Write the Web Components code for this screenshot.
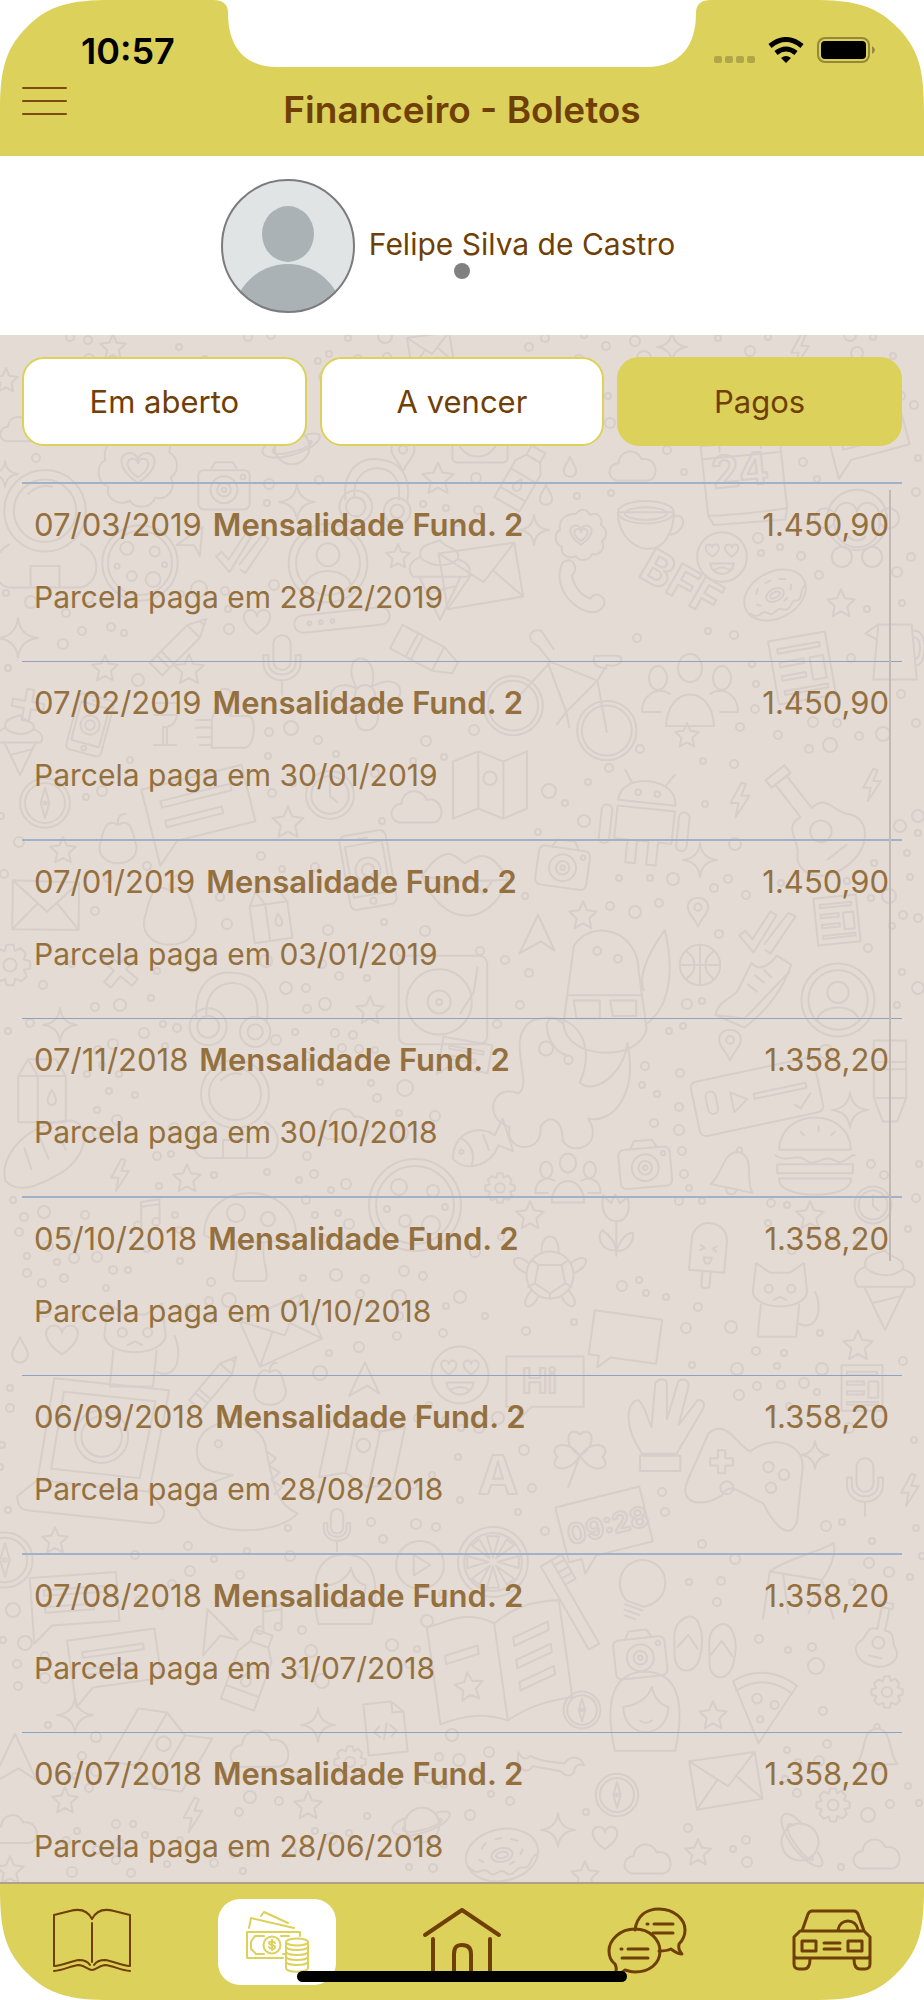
<!DOCTYPE html>
<html lang="pt-BR">
<head>
<meta charset="utf-8">
<meta name="viewport" content="width=device-width, initial-scale=1">
<title>Financeiro - Boletos</title>
<style>
html{background:#fff}
body{margin:0;font-family:Inter,"Liberation Sans",sans-serif;color:#703f06;
--accent:#dcd15b;--ink:#703f06;--muted:#94703f;--paper:#e4dbd4}
</style>
</head>
<body>
<app-screen>
  <status-bar slot="top" time="10:57"></status-bar>
  <title-bar slot="top">Financeiro - Boletos</title-bar>
  <student-card slot="student">Felipe Silva de Castro</student-card>
  <filter-tabs slot="filters">
    <filter-button>Em aberto</filter-button>
    <filter-button>A vencer</filter-button>
    <filter-button active>Pagos</filter-button>
  </filter-tabs>
  <boleto-list slot="list"></boleto-list>
  <tab-bar slot="bottom"></tab-bar>
</app-screen>

<script>
const define = (name, html, setup) => {
  const template = document.createElement('template');
  template.innerHTML = html;
  customElements.define(name, class extends HTMLElement {
    constructor() {
      super();
      this.attachShadow({ mode: 'open' }).append(template.content.cloneNode(true));
    }
    connectedCallback() { if (setup) setup(this, this.shadowRoot); }
  });
};

/* ---------- doodle wallpaper ---------- */
const star = '<path d="M0-46L13-16L46-12L21 11L28 44L0 28L-28 44L-21 11L-46-12L-13-16Z"/>';
const heart = '<path d="M0 40C-60 0-50-40-22-40C-8-40 0-28 0-20C0-28 8-40 22-40C50-40 60 0 0 40Z"/>';
const cam = '<rect x="-46" y="-30" width="92" height="70" rx="10"/><path d="M-24-30L-16-44H16L24-30"/><circle cy="5" r="24"/><circle cy="5" r="12"/><circle cy="5" r="4"/><circle cx="34" cy="-18" r="4"/>';
const shapes = {
  star, heart, cam,
  spark: '<path d="M0-50Q5-5 50 0Q5 5 0 50Q-5 5-50 0Q-5-5 0-50Z"/>',
  cloud: '<path d="M-35 28C-58 20-50-8-30-8C-28-38 10-40 18-16C50-24 58 26 30 28Z"/>',
  drop: '<path d="M0-46C10-20 28-4 28 16C28 54-28 54-28 16C-28-4-10-20 0-46Z"/>',
  badge: '<path d="M-10-42C0-56 14-50 18-40C34-48 44-34 40-20C54-12 52 6 42 12C50 28 36 42 22 38C16 54-6 52-10 42C-26 50-42 38-38 24C-54 18-54-4-42-10C-46-30-30-44-10-42Z"/><g transform="scale(.48)">' + heart + '</g><g transform="scale(.3)">' + heart + '</g>',
  planet: '<circle r="28"/><path d="M-24-12C-60 0-56 26-4 14C46 2 62-30 24-20"/><path d="M-27 0C-40 12-20 14 0 8C26 2 40-10 27-10"/>',
  pin: '<path d="M0 48C-12 18-34 6-34-16C-34-58 34-58 34-16C34 6 12 18 0 48Z"/><circle cy="-16" r="12"/>',
  headset: '<path d="M-40 10C-44-30-20-48 6-44C36-42 48-20 44 12"/><path d="M-28 6C-30-20-12-34 6-32C24-30 36-16 32 10"/><circle cx="-26" cy="20" r="22"/><circle cx="-26" cy="20" r="13"/><circle cx="30" cy="26" r="18"/><circle cx="30" cy="26" r="9"/>',
  astro: '<circle cy="-16" r="34"/><circle cy="-16" r="26"/><path d="M-30 12C-48 22-44 46-30 48H30C46 44 48 20 30 12M-14-30C-8-36 0-38 6-36M-12 48V30H12V48"/>',
  cookie: '<circle r="46"/><circle r="39"/><circle cx="-16" cy="-18" r="8"/><circle cx="18" cy="-14" r="6"/><circle cx="-10" cy="16" r="6"/><circle cx="16" cy="20" r="9"/><circle cx="30" cy="2" r="3"/><circle cx="-28" cy="4" r="3"/>',
  check: '<path d="M-48 6L-38-2L-26 12L4-34L14-28L-24 34ZM-6 20L34-32L46-26L4 36L-4 30"/>',
  user: '<circle r="48"/><circle r="39"/><circle cy="-10" r="14"/><path d="M-28 27C-22 4 22 4 28 27"/>',
  pencil: '<path d="M-12-26L0-50L12-26V46H-12ZM-12-26H12M-12 32H12M-12 24H12M-4-42H4"/>',
  bar: '<rect x="-50" y="-9" width="100" height="18" rx="9"/><circle cx="-34" r="2"/><circle cx="-22" r="2"/><circle cx="-10" r="2"/>',
  tube: '<path d="M-44-18L20-18L46-8V8L20 18H-44ZM-20-18V18M-12-18V18M20-18V18"/>',
  mic: '<rect x="-14" y="-48" width="28" height="56" rx="14"/><path d="M-30-16V-4C-30 34 30 34 30-4V-16H22V-4C22 22-22 22-22-4V-16ZM0 24V48"/>',
  thumb: '<path d="M-44 0H-20L-6-46C8-52 16-40 8-6H36C48-4 46 40 30 42H-20V0M-20 12C-30 10-42 12-44 12M-20 26H-42M-20 38H-38"/>',
  plus: '<path d="M-10-44H10V-10H44V10H10V44H-10V10H-44V-10H-10Z"/>',
  cone: '<path d="M-26-4L0 50L26-4ZM-34-4C-46-20-26-30-24-28C-30-46-4-46 0-50C4-40 28-40 22-26C44-20 36-4 34-4ZM-22-26C-8-16 10-16 22-26M-14 16L18 8"/>',
  flower: '<circle r="12"/><path d="M-10-8C-34-54 20-56 8-10C52-34 54 22 11 7C32 54-28 52-6 11C-54 30-50-26-10-8Z"/>',
  glass: '<path d="M-26-44H26C28-8 14 2 4 4V40H22M-4 4V40H-22M4 40H-4M-4 4H4M-22-20H22"/>',
  bottle: '<path d="M-12-50H12V-34L22-18V46H-22V-18L-12-34ZM-12-34H12M-22-4H22M-22 28H22"/><path d="M0 2C8 14 8 20 0 22C-8 20-8 14 0 2Z"/>',
  cal: '<path d="M-44-36L40-44L48 30C20 34-10 38-36 38ZM-42-22L42-30M-36 38L-30 48L46 42L48 30M-24-44V-30M20-48V-34"/>',
  cup: '<path d="M-46-14C-46 20-20 40 0 38C20 38 34 14 34-14Z"/><ellipse cx="-6" cy="-14" rx="40" ry="16"/><ellipse cx="-6" cy="-12" rx="30" ry="9"/><path d="M33-8C56-14 50 18 26 18"/>',
  smile: '<circle r="46"/><g transform="translate(-18 -12) scale(.28)">' + heart + '</g><g transform="translate(18 -12) scale(.28)">' + heart + '</g><path d="M-22 12H22C18 38-18 38-22 12ZM-14 24C-6 18 6 18 14 24"/>',
  monkey: '<circle cy="-6" r="36"/><circle cx="-38" cy="-8" r="12"/><circle cx="38" cy="-8" r="12"/><path d="M-26 4C-34-30-4-34 0-16C4-34 34-30 26 4C22 34-22 34-26 4ZM-10 14C-4 20 4 20 10 14"/><circle cx="-18" cy="38" r="12"/><circle cx="18" cy="38" r="12"/>',
  call: '<path d="M-30-44C-10-58-2-30-14-22C-10 0 4 14 18 18C26 2 50 18 40 32C20 64-56 10-30-44Z"/>',
  donut: '<ellipse rx="48" ry="34"/><ellipse rx="14" ry="9"/><ellipse rx="8" ry="4"/><path d="M-46 6C-36 24-30 8-22 18C-16 30-6 14 0 24C10 34 16 16 24 22C34 26 36 8 46 8M-24-14L-18-20M16-18L24-14M-30 0L-26 4M28-2L24 4M-4-22H4M8 14L14 12"/>',
  env: '<path d="M-46-24L38-36L48 24L-36 38ZM-46-24L4 8L38-36M-36 38L-10 0M48 24L16-4"/>',
  bike: '<circle cx="-30" cy="10" r="19"/><circle cx="-30" cy="10" r="16"/><circle cx="30" cy="26" r="19"/><circle cx="30" cy="26" r="16"/><path d="M-31 9L-6-18L24-6L4 14L-8-18M24-6L30 27M-6-18L-14-28C-22-32-20-40-12-38L-4-26M24-6L30-16C40-14 42-22 36-22H22C20-14 28-14 30-14M4 14L-2 22M4 14L6 24"/>',
  people: '<path d="M-24 36C-22-6 22-6 24 36ZM-30 22H-48C-48 4-32-4-20 4M30 22H48C48 4 32-4 20 4"/><ellipse cy="-22" rx="12" ry="14"/><ellipse cx="-32" cy="-12" rx="9" ry="12"/><ellipse cx="32" cy="-12" rx="9" ry="12"/>',
  page: '<path d="M-38-42H38V42H-38ZM-28-30H28V-24H-28ZM-28-12H4V-6H-28ZM-28 6H4V12H-28ZM12-12H30V18H12ZM-28 26H30V31H-28Z"/>',
  jug: '<path d="M-26-40H26L34 46H-34ZM28-30C54-34 50 26 32 24M29-20C42-22 42 14 31 14M-26-40L-46-26L-28-16"/>',
  bubble: '<path d="M-46-32H46V20H-26L-46 38ZM-32-18H32V-12H-32ZM-32 0H20V6H-32Z"/>',
  compass: '<circle r="46"/><circle r="37"/><path d="M0-28L8 0L0 28L-8 0Z"/><circle r="3"/>',
  clock: '<circle r="46"/><circle r="36"/><path d="M0-24V2L14 14"/>',
  map: '<path d="M-44-28L-14-40L16-28L44-40V28L16 40L-14 28L-44 40ZM-14-40V28M16-28V40"/><circle cx="0" cy="-8" r="8"/>',
  android: '<path d="M-30-18C-30-48 30-48 30-18ZM-18-38L-26-50M18-38L26-50M-30-12H30V22H16V46H6V22H-6V46H-16V22H-30Z"/><rect x="-46" y="-12" width="11" height="40" rx="5"/><rect x="35" y="-12" width="11" height="40" rx="5"/><circle cx="-10" cy="-28" r="3"/><circle cx="10" cy="-28" r="3"/>',
  bolt: '<path d="M4-48L-26 8H-4L-12 48L26-12H4L16-44Z"/>',
  guitar: '<path d="M-6-8C-24-10-18 8-28 16C-38 28-26 48 0 48C26 48 38 28 28 16C18 8 24-10 6-8V-42H-6Z"/><circle cy="12" r="9"/><path d="M-10-42H10V-50H-10ZM-10 34H10"/>',
  device: '<rect x="-30" y="-48" width="60" height="96" rx="8"/><path d="M-24-34H24V32H-24ZM-6-41H6"/><circle r="16"/><circle r="8"/><circle cy="40" r="4"/>',
  pear: '<path d="M0-28C26-44 28-8 34 10C40 54-40 54-34 10C-28-8-26-44 0-28ZM0-28C-2-42 6-50 14-48"/>',
  lips: '<path d="M-48-10C-20-50-10-30 0-24C10-30 26-46 48-6C26 50-26 46-48-10ZM-48-10C-20-4 20-4 48-6M-30-4L-20 10L-10-4M10-4L20 10L30-4"/>',
  tri: '<path d="M-40 40L0-44L36 34L6 14Z"/>',
  pine: '<path d="M-24-34C-10-56 26-46 26-14L32 30C26 56-30 54-32 26ZM-28 4H28M-24 8H-4V22H-22ZM4 8H24V20H6ZM-32 26C-52 10-46 46-30 50M32 26C56 8 50-30 46-46C30-24 26-8 30 0"/><circle cx="-6" cy="-30" r="3"/><circle cx="10" cy="-24" r="3"/>',
  ball: '<circle r="46"/><path d="M-46 0H46M0-46V46M-32-32C-6-14-6 14-32 32M32-32C6-14 6 14 32 32"/>',
  shoe: '<path d="M-46 30C-42 10-24 14-18-4L-6-28C4-16 16-28 22-36L38-26C30 0 10 26-14 44ZM-46 30L-14 34L36-18M-10-4L0 4M-2-14L8-6M8-20L16-12"/>',
  disc: '<rect x="-46" y="-46" width="92" height="92" rx="8"/><circle cx="-4" cy="2" r="34"/><circle cx="-4" cy="2" r="12"/><circle cx="-4" cy="2" r="3"/><path d="M36-34L32-8L18 14"/>',
  gear: '<path d="M-8-46H8L11-32L24-39L36-26L31-13L46-8V8L32 11L38 26L26 37L12 31L8 46H-8L-11 32L-26 38L-37 26L-31 12L-46 8V-8L-32-11L-38-26L-26-37L-12-31Z"/><circle r="15"/>',
  milk: '<path d="M-34-20L-20-44H20L34-20V46H-34ZM-34-20H34M-20-44L-6-20V46"/><path d="M14 0C22 12 22 20 14 22C6 20 6 12 14 0Z"/>',
  octo: '<path d="M-20-46C14-56 26-26 14-2C24 8 46-8 48-30C56 6 38 28 20 24C32 42 10 52 2 40C2 24-8 20-14 30C-12 50-40 48-36 30C-56 24-48-2-30 6C-18 0-40-34-20-46Z"/><circle cx="-10" cy="-26" r="5"/><circle cx="6" cy="-18" r="3"/>',
  voice: '<rect x="-50" y="-22" width="100" height="44" rx="5"/><path d="M-20-8V8L-8 0ZM-2-3H40V1H-2ZM28 12L32 16L42 6"/><rect x="-40" y="-12" width="8" height="18" rx="4"/>',
  burger: '<path d="M-40-8C-38-56 38-56 40-8ZM-44-2C-30 8-22-6-10 4C0 12 10-4 22 4C32 10 40-4 44-2M-42 8H42V18H-42ZM-40 24H40C42 48-42 48-40 24Z"/><path d="M-16-28L-12-24M4-34V-28M18-24L22-28"/>',
  bell: '<path d="M-38 30C-20 10-30-34 0-36C30-34 20 10 38 30ZM-10 30C-8 44 8 44 10 30M-5-36C-6-48 6-48 5-36"/>',
  fish: '<path d="M-46 6C-30-34 10-30 26-6L46-26L44 26L26 10C6 34-32 34-46 6ZM-22-18C-12-6-12 12-22 24M10-12V12"/><circle cx="-30" cy="0" r="3"/>',
  bread: '<path d="M-46 30C-54 0-20-38 30-40C54-36 50 0 20 20C0 32-30 48-46 30ZM-24-8L-16 16M-6-20L4 4M14-28L24-6"/>',
  note: '<path d="M-20 28V-38L34-46V18M-20-24L34-32"/><circle cx="-30" cy="30" r="11"/><circle cx="24" cy="20" r="11"/>',
  shroom: '<path d="M-46 0C-46-56 46-56 46 0C30 10-30 10-46 0ZM-14 8C-10 24-22 44-14 46H14C22 44 10 24 14 8"/><circle cx="-14" cy="-22" r="9"/><circle cx="18" cy="-16" r="7"/>',
  turtle: '<circle r="28"/><path d="M-14-12H14L18 10L0 22L-18 10ZM-14-12L-22-18M14-12L22-18M18 10L26 14M0 22V28M-18 10L-26 14M-10-27C-12-52 12-52 10-27M-25-14C-44-30-52-12-28-2M25-14C44-30 52-12 28-2M-22 18C-40 40-22 44-14 26M22 18C40 40 22 44 14 26"/>',
  tulip: '<path d="M-18-46L-6-34L0-48L8-34L20-44C26-16 14-6 2-6C-12-6-24-20-18-46ZM2-6V48M2 40C-26 40-28 14-20 8C-8 16 0 26 2 40C10 20 20 12 28 12C30 30 16 42 2 40"/>',
  pop: '<path d="M-26 24V-20C-26-56 26-56 26-20V24ZM-6 24V46C-4 50 4 50 6 46V24M-12-14L-6-10L-12-6M12-14L6-10L12-6M-6 4H6C4 16-4 16-6 4Z"/>',
  cat: '<path d="M-34-10L-30-46L-12-34H12L30-46L34-10C30 14-30 14-34-10ZM-24 6L-28 46H20L24 6M24 30C50 40 52 6 44-10"/><circle cx="-14" cy="-14" r="5"/><circle cx="14" cy="-14" r="5"/><path d="M-8 0L0-4L8 0"/>',
  box: '<path d="M-46-34H46V26H-16L-32 42V26H-46Z"/>',
  hand: '<path d="M-24 30C-44 0-40-24-28-26C-20-20-18-4-14 2L-10-44C-4-50 2-48 2-42V-6L14-46C22-50 26-44 24-38L14 0L34-26C42-26 42-20 38-14L12 30ZM-26 32H16V48H-26Z"/>',
  laptop: '<path d="M-34-44H40L34 22H-38ZM-27-36H32L27 14H-30ZM-38 22L-50 34C-48 42-46 42-40 42H36C46 42 46 34 44 32L34 22"/><circle cx="0" cy="-10" r="17"/><circle cx="0" cy="-10" r="13"/>',
  dino: '<path d="M-36-20C-36-52 20-52 22-20C28 10 30 24 48 32C30 52-30 50-34 30C-44 24-30 14-28 8L-6 0C-20-2-36-2-36-20ZM22-20L30-14L24-8L33-2L26 4L35 10L29 16"/><circle cx="-18" cy="-26" r="3"/>',
  clover: '<path d="M0-2C-30-20-16-50 0-34C16-50 30-20 0-2C20-30 50-16 34 0C50 16 20 30 0-2ZM0-2C-20-30-50-16-34 0C-50 16-20 30 0-2L-18 46"/>',
  pad: '<path d="M-28-36C-14-48-6-26 4-22C22-36 48-28 44-6L40 32C34 48 22 34 14 18C-4 10-12 0-18 12C-34 22-52 18-44 0Z"/><g transform="translate(-18 -14) scale(.2)"><path d="M-14-44H14V-14H44V14H14V44H-14V14H-44V-14H-14Z"/></g><circle cx="-14" cy="6" r="5"/><circle cx="18" cy="-10" r="4"/><circle cx="30" cy="-4" r="4"/><circle cx="20" cy="6" r="4"/>',
  lime: '<circle r="46"/><circle r="38"/><path d="M0-6L-8-34H8ZM0 6L-8 34H8ZM-6 0L-34-8V8ZM6 0L34-8V8ZM-4-5L-28-22L-18-30ZM4 5L28 22L18 30ZM4-5L28-22L18-30ZM-4 5L-28 22L-18 30Z"/>',
  play: '<circle r="46"/><path d="M-12-20V20L20 0Z"/>',
  brush: '<path d="M-6-48H6V48H-6ZM6-48H18V-20H6M6-42H18M6-34H18M6-27H18"/>',
  chair: '<path d="M-36-10C-20-24 30-36 40-44C44-30 34-10 26 0L40 46M-36-10L-44 46M-36-10L26 0L10 40M-20-6L-14 40"/>',
  bulb: '<path d="M-14 22C-50 0-34-46 0-46C34-46 50 0 14 22ZM-14 28H14M-12 36H12M-8 44H8"/>',
  flip: '<path d="M-30-40C-8-56 0-20-6 6C-10 34-40 34-40 6C-40-14-44-30-30-40ZM-36-4L-22-20L-10-2M14-30C34-46 46-12 38 14C34 44 4 42 6 14C6-6 2-20 14-30ZM8 6L22-12L36 8"/>',
  book: '<path d="M0-30C-20-44-36-34-48-34V36C-30 32-16 32 0 40C16 32 30 30 48 30V-40C30-42 16-40 0-30ZM0-30V40M-38-12L-14-16V-10L-38-6ZM12-18L38-26V-20L12-12ZM12-2L38-10V-4L12 4ZM12 14L38 6V12L12 20Z"/><g transform="translate(-24 12) scale(.22)">' + star + '</g>',
  girl: '<path d="M-36 46C-48-10-40-48 0-48C40-48 48-10 36 46ZM-26-6C-10-8 4-16 8-30C12-14 20-8 28-6C26 34-24 34-26-6ZM-6 10C-2 14 4 14 8 10"/>',
  pizza: '<path d="M-40-30C-10-48 20-40 40-24L-8 48ZM-36-18C-10-34 14-30 34-14"/><circle cx="-10" cy="-8" r="6"/><circle cx="12" cy="0" r="5"/><circle cx="-6" cy="18" r="4"/>',
  doc: '<path d="M-34-46H16L36-26V46H-34ZM16-46V-26H36M-10-4L-20 6L-10 16M10-4L20 6L10 16M4-8L-4 20"/>',
  wrench: '<path d="M-48-10C-40 0-34-2-30-8C-20-4-10-4 20-6C28-22 42-18 48-8C40-10 34-4 36 4C30 14 22 10 16 6H-24C-30 20-46 16-48-10Z"/>'
};

const doodles = `star 113 347 28|star 6 380 26|cloud 20 430 40|badge 138 468 78|cam 224 487 56|planet 292 447 62|pin 403 455 34|star 438 478 34|headset 375 492 74|spark 5 474 26
astro 45 530 120|spark 297 502 36|cookie 140 563 82|tri 195 540 34 30|check 243 553 56|user 328 563 82|star 398 556 26|cone 440 580 80|pencil 180 645 74 45|heart 257 622 30|bar 342 620 96 -6|tube 425 652 74 28
mic 282 665 62|thumb 225 720 66|star 189 669 32|star 105 668 28|spark 18 638 40|plus 28 705 36 10|cone 20 745 60|device 90 725 60 15|flower 365 695 84|glass 165 725 50|bottle 522 478 66 30|drop 570 467 22|drop 546 495 22
cloud 633 467 48|cal 742 480 94|cup 650 522 70|smile 722 557 54|monkey 857 525 84|badge 581 535 50|call 580 588 58|donut 775 595 68 -28|star 841 603 30|spark 534 530 30|env 480 575 90|bike 560 690 156|people 690 690 100
page 802 668 76 -10|jug 895 650 64|star 687 735 26|bubble 868 438 84 -15|disc 480 435 60|spark 672 347 30|bolt 800 350 34|env 430 350 50
compass 45 803 54|bubble 200 812 112 -14|clock 330 795 52|cloud 417 808 52|map 490 785 84|android 645 820 96 6|bolt 740 800 36|guitar 812 820 120 -38|star 288 822 34|device 368 870 78 -10|cam 563 865 56 8|pear 118 840 54
lips 465 885 90|star 63 850 28|env 45 905 78 10|pear 170 912 76|milk 270 915 56 -8|tri 538 935 46|star 583 915 30|pin 698 912 30|check 768 932 60|page 837 920 56 -6|pine 605 990 130|ball 700 965 44|shoe 757 988 90|user 838 1000 76
disc 443 1000 96|headset 230 1010 84|gear 10 965 44|bolt 872 785 34|plus 120 970 44 40|milk 42 1090 70|astro 235 1110 100|octo 560 1085 140|pin 730 1045 32|voice 757 1097 126 -12|burger 815 1157 90|bell 735 1172 56 12
cam 645 1165 56 -5|people 568 1178 68|cookie 415 1205 100|fish 480 1145 66 -20|star 187 1178 30|bolt 120 1175 34|gear 500 1188 32|spark 850 1110 36|bread 45 1155 86|note 148 1215 34|shroom 250 1235 100|turtle 550 1275 84
tulip 615 1225 64|pop 708 1255 68 5|cone 885 1290 80|star 530 1215 30|star 810 1215 30|cat 780 1300 80|clock 873 1205 40|bubble 465 1058 54 10|cloud 345 1125 50|tube 890 1080 90 90|star 370 1010 30|spark 60 1025 34
heart 62 1340 36|cat 135 1345 90|smile 460 1375 62|box 545 1385 84|page 862 1388 54|pencil 215 1382 66 40|hand 665 1425 96|laptop 100 1452 156 6|dino 240 1475 120|map 362 1452 84 12|clover 580 1457 66|pad 745 1480 130
mic 865 1487 60|drop 20 1350 28|pear 270 1385 46|star 858 1345 32|env 280 1330 80 -15|box 625 1340 74 8|tri 365 1380 40|box 605 1528 94 -14|star 55 1540 28|lime 493 1562 76|play 420 1565 52|girl 345 1590 74|mic 337 1530 44
brush 570 1605 100 -30|chair 800 1580 84|bulb 640 1590 66 20|flip 705 1650 76|cam 640 1655 56 -6|guitar 880 1635 66 12|bubble 75 1605 94 -4|bubble 115 1665 96 -8|tri 215 1630 50 -20|note 270 1620 34|book 500 1665 140 -8|girl 645 1712 84
pizza 765 1705 80|gear 887 1692 34|spark 75 1715 36|doc 385 1728 56 -6|compass 582 1710 40|star 713 1715 30|wrench 550 1765 70 10|env 725 1780 78|compass 617 1795 46|gear 833 1805 36|donut 502 1855 76 -12|planet 800 1842 66 70
planet 422 1825 62|star 308 1805 30|bolt 193 1815 36|cloud 648 1860 48|cloud 877 1855 48|star 65 1800 28|star 585 1875 30|bottle 250 1670 80 20|map 160 1750 90 30|compass 5 1560 60|gear 350 1762 34|cloud 15 1830 46|star 10 1870 30
spark 558 1830 34|heart 605 1838 28|star 698 1852 28|cloud 260 1750 60|tri 15 1760 60|bell 877 1748 54|spark 318 1725 34|spark 815 1455 28|bolt 910 1490 34|spark 700 860 34`
  .split(/[|\n]/).map(s => s.split(' ')).map(([k, ...n]) => [k, ...n.map(Number)]);

const wallpaper = () => {
  const placed = doodles.map(([, x, y, s]) => [x, y, s * .5]);
  let out = doodles.map(([k, x, y, s, r = 0]) =>
    `<g transform="translate(${x} ${y}) rotate(${r}) scale(${s / 100})">${shapes[k]}</g>`).join('');
  placed.push([650, 585, 28], [685, 600, 28], [495, 1475, 26]);
  let seed = 7;
  const rnd = () => (seed = (seed * 16807) % 2147483647) / 2147483647;
  for (let i = 0; i < 2600; i++) {
    const x = Math.round(rnd() * 924), y = Math.round(335 + rnd() * 1545), r = 3 + Math.round(rnd() * rnd() * 5);
    if (placed.some(([a, b, c]) => Math.hypot(a - x, b - y) < c + r + 7)) continue;
    placed.push([x, y, r]);
    out += `<circle cx="${x}" cy="${y}" r="${r}"/>`;
  }
  return out + `<g font-weight="700"><text x="712" y="486" font-size="44" transform="rotate(-6 740 475)">24</text>
    <text x="634" y="594" font-size="46" transform="rotate(30 670 590)">BFF</text>
    <text x="522" y="1393" font-size="34">Hi</text><text x="478" y="1494" font-size="54">A</text>
    <text x="567" y="1536" font-size="28" transform="rotate(-14 605 1528)">09:28</text></g>`;
};

define('doodle-wallpaper', `<style>
:host{display:block;overflow:hidden}
svg{display:block;width:100%;height:100%;fill:none;stroke:#d7cec9;stroke-width:2;stroke-linejoin:round;stroke-linecap:round}
svg *{vector-effect:non-scaling-stroke}
</style><svg viewBox="0 335 924 1548" preserveAspectRatio="xMidYMin slice" aria-hidden="true"></svg>`,
(el, root) => { root.querySelector('svg').innerHTML = wallpaper(); });

/* ---------- frame ---------- */
define('app-screen', `<style>
:host{position:relative;display:flex;flex-direction:column;min-height:100vh;overflow:hidden;background:#fff}
header{background:var(--accent)}
main{position:relative;flex:1;display:flex;flex-direction:column;padding:22px 22px 0;background:var(--paper);overflow:hidden}
doodle-wallpaper{position:absolute;inset:0}
.body{position:relative;flex:1;display:flex;flex-direction:column;gap:36px}
.corner{position:absolute;width:112px;height:112px;fill:#fff}
.tl{top:0;left:0}.tr{top:0;right:0;transform:scaleX(-1)}
.bl{bottom:0;left:0;transform:scaleY(-1)}.br{bottom:0;right:0;transform:scale(-1)}
.notch{position:absolute;top:0;left:calc(50% - 249px);width:498px;height:67px;fill:#fff}
.home{position:absolute;bottom:18px;left:calc(50% - 165px);width:330px;height:11px;border-radius:6px;background:#000}
</style>
<header><slot name="top"></slot></header>
<slot name="student"></slot>
<main><doodle-wallpaper></doodle-wallpaper><div class="body"><slot name="filters"></slot><slot name="list"></slot></div></main>
<slot name="bottom"></slot>
${['tl', 'tr', 'bl', 'br'].map(c => `<svg class="corner ${c}" viewBox="0 0 112 112"><path d="M0 0H112C70 0 49 5 27 27C5 49 0 70 0 112Z"/></svg>`).join('')}
<svg class="notch" viewBox="0 0 498 67"><path d="M0 0C10 0 15 4 15 13C15 45 30 67 65 67H433C468 67 483 45 483 13C483 4 488 0 498 0Z"/></svg>
<div class="home"></div>`);

define('status-bar', `<style>
:host{display:flex;justify-content:space-between;align-items:center;height:76px;padding:26px 46px 0 81px;box-sizing:border-box}
time{font-size:36px;line-height:40px;font-weight:600;color:#000}
svg{display:block;width:164px;height:28px}
</style><time></time>
<svg viewBox="0 0 164 28" aria-hidden="true"><g fill="#b1a549"><rect y="19" width="8" height="7" rx="2"/><rect x="11" y="19" width="8" height="7" rx="2"/><rect x="22" y="19" width="8" height="7" rx="2"/><rect x="33" y="19" width="8" height="7" rx="2"/></g>
<g fill="none" stroke="#000" stroke-width="5"><path d="M56 9Q72-4 88 9"/><path d="M62 16Q72 8 82 16"/></g><path d="M67 21Q72 17 77 21L72 26Z"/>
<rect x="104" y="1" width="51" height="24" rx="7" fill="none" stroke="#94893a" stroke-width="2"/><rect x="107" y="4" width="45" height="18" rx="4"/><path d="M158 9Q164 13 158 17Z" fill="#94893a"/></svg>`,
(el, root) => { root.querySelector('time').textContent = el.getAttribute('time'); });

define('title-bar', `<style>
:host{display:grid;grid-template-columns:46px 1fr 46px;height:80px;padding:0 22px;box-sizing:border-box}
button{height:46px;padding:0;border:0;background:none;cursor:pointer}
svg{display:block;width:46px;height:46px;stroke:#7d4a12;stroke-width:2;stroke-linecap:round}
h1{margin:0;padding-top:10px;text-align:center;font-size:37px;line-height:48px;font-weight:600}
</style>
<button type="button" aria-label="Menu"><svg viewBox="0 0 46 46"><path d="M1 12H44M1 25H44M1 38H44"/></svg></button>
<h1><slot></slot></h1>`);

define('student-card', `<style>
:host{position:relative;display:flex;align-items:center;justify-content:center;gap:14px;height:179px;padding-right:28px;box-sizing:border-box;font-size:30px;line-height:40px;background:#fff}
svg{width:134px;height:134px}
span{padding-bottom:4px}
i{position:absolute;left:calc(50% - 8px);top:107px;width:16px;height:16px;border-radius:50%;background:#808080}
</style>
<svg viewBox="0 0 134 134" role="img" aria-label="Foto do aluno"><defs><clipPath id="c"><circle cx="67" cy="67" r="66"/></clipPath></defs>
<g clip-path="url(#c)"><rect width="134" height="134" fill="#e1e4e5"/><g fill="#aab2b6"><ellipse cx="67" cy="55" rx="26" ry="28"/><ellipse cx="67" cy="142" rx="56" ry="57"/></g></g><circle cx="67" cy="67" r="66" fill="none" stroke="#7b7c7d" stroke-width="2"/></svg>
<span><slot></slot></span><i></i>`);

define('filter-tabs', `<style>:host{display:grid;grid-template-columns:repeat(3,1fr);gap:13px}</style><slot></slot>`);

define('filter-button', `<style>
:host{display:block}
button{width:100%;height:89px;border:2px solid var(--accent);border-radius:22px;background:#fff;color:inherit;font:inherit;font-size:31px;line-height:40px;cursor:pointer}
:host([active]) button{background:var(--accent)}
</style><button type="button"><slot></slot></button>`,
(el, root) => root.querySelector('button').setAttribute('aria-pressed', el.hasAttribute('active')));

define('boleto-row', `<style>
:host{display:grid;grid-template-columns:auto 1fr auto;column-gap:11px;row-gap:32px;align-content:start;padding:21px 13px 44px 12px;border-top:1px solid #8da3c0;font-size:31px;line-height:40px;color:var(--muted)}
:host(:nth-child(odd)){border-top:2px solid #a0b1c8}
b{font-weight:600}
p{grid-column:1/-1;margin:0;font-size:30px}
</style><span><slot name="date"></slot></span><b><slot name="title"></slot></b><span><slot name="value"></slot></span><p><slot></slot></p>`);

const boletos = [
  ['07/03/2019', '1.450,90', '28/02/2019'], ['07/02/2019', '1.450,90', '30/01/2019'],
  ['07/01/2019', '1.450,90', '03/01/2019'], ['07/11/2018', '1.358,20', '30/10/2018'],
  ['05/10/2018', '1.358,20', '01/10/2018'], ['06/09/2018', '1.358,20', '28/08/2018'],
  ['07/08/2018', '1.358,20', '31/07/2018'], ['06/07/2018', '1.358,20', '28/06/2018']];

/* the last row runs a little way under the tab bar */
define('boleto-list', `<style>
:host{position:relative;display:block;margin-bottom:-30px}
.thumb{position:absolute;right:11px;top:8px;height:54%;width:2px;background:#c2b9b4}
</style><div class="rows" role="list"></div><div class="thumb"></div>`,
(el, root) => {
  root.querySelector('.rows').innerHTML = boletos.map(([date, value, paid]) =>
    `<boleto-row role="listitem"><span slot="date">${date}</span><span slot="title">Mensalidade Fund. 2</span><span slot="value">${value}</span>Parcela paga em ${paid}</boleto-row>`).join('');
});

define('tab-link', `<style>
:host{display:flex;justify-content:center}
a{display:flex;align-items:center;justify-content:center;width:118px;height:86px;border-radius:22px;color:var(--ink)}
:host([active]) a{background:#fff;color:var(--accent)}
::slotted(svg){display:block;width:80px;height:70px;fill:none;stroke:currentColor;stroke-width:2;stroke-linejoin:round;stroke-linecap:round}
</style><a href="#"><slot></slot></a>`,
(el, root) => root.querySelector('a').setAttribute('aria-label', el.getAttribute('label')));

define('tab-bar', `<style>
:host{position:relative;display:grid;grid-template-columns:repeat(5,1fr);height:118px;padding-top:15px;box-sizing:border-box;border-top:2px solid #b0a08a;background:var(--accent)}
</style>
<tab-link label="Agenda"><svg viewBox="0 2 80 70"><path d="M40 14C36 6 29 3 18 6L2 10V61C12 60 19 56 27 55C33 55 36 57 38 60M40 14C44 6 51 3 62 6L78 10V61C68 60 61 56 53 55C47 55 44 57 42 60M40 18V57M2 66C12 65 18 61 27 60C34 61 36 65 40 65C44 65 46 61 53 60C62 61 68 65 78 66"/></svg></tab-link>
<tab-link label="Financeiro" active><svg viewBox="0 0 80 70"><path d="M10 25H63V29M10 25V51H46M12 21L14 11L57 21M24 9L27 5L51 16M27 29H18C16 32 14 34 14 35V42C16 43 17 45 19 47H27M44 29H52M46 47H48"/><circle cx="35" cy="38" r="8.500"/><path d="M38 36C37 34 32 34 32 36C32 39 38 37 38 40C38 43 33 42 32 40M35 33V43"/><g fill="#fff"><path d="M49 36V61C49 66 71 66 71 61V36"/><ellipse cx="60" cy="35" rx="11" ry="3.500"/></g><path d="M49 40C51 44 69 44 71 40M49 45C51 49 69 49 71 45M49 50C51 54 69 54 71 50M49 55C51 59 69 59 71 55"/></svg></tab-link>
<tab-link label="Início"><svg viewBox="0 2 80 70" style="stroke-width:4"><path d="M3 30L40 5L77 30M11 34V68M68 34V68M32 68V49C32 42 35 40 40 40C46 40 49 43 49 49V68"/></svg></tab-link>
<tab-link label="Mensagens"><svg viewBox="0 3 80 70" style="stroke-width:3"><path d="M28 26C30 12 39 5 52 5C67 5 78 15 78 26C78 32 76 36 72 40C71 45 73 48 75 50C70 50 67 47 64 45C60 47 56 47 52 47"/><path d="M28 25C43 25 53 36 53 47C53 60 42 68 28 68C25 68 21 67 18 66C15 69 11 70 8 70C10 66 9 62 8 60C4 57 2 53 2 47C2 36 13 25 28 25Z"/><path d="M47 20H66M46 29H66M21 45H41M15 54H41M40 20H41M14 45H15"/></svg></tab-link>
<tab-link label="Transporte"><svg viewBox="0 4 80 70" style="stroke-width:3"><path d="M10 28L16 11C17 9 18 8 20 8H62C64 8 65 9 66 11L72 28M8 28H72L78 34V52C78 54 77 55 75 55H5C3 55 2 54 2 52V34ZM2 53V61C2 64 4 66 7 66H12C16 66 18 63 18 56M78 53V61C78 64 76 66 73 66H68C64 66 62 63 62 56M46 27C48 15 64 15 66 27M10 38H24V48H10ZM56 38H70V48H56ZM32 40H48M32 46H48"/></svg></tab-link>`);
</script>
</body>
</html>
